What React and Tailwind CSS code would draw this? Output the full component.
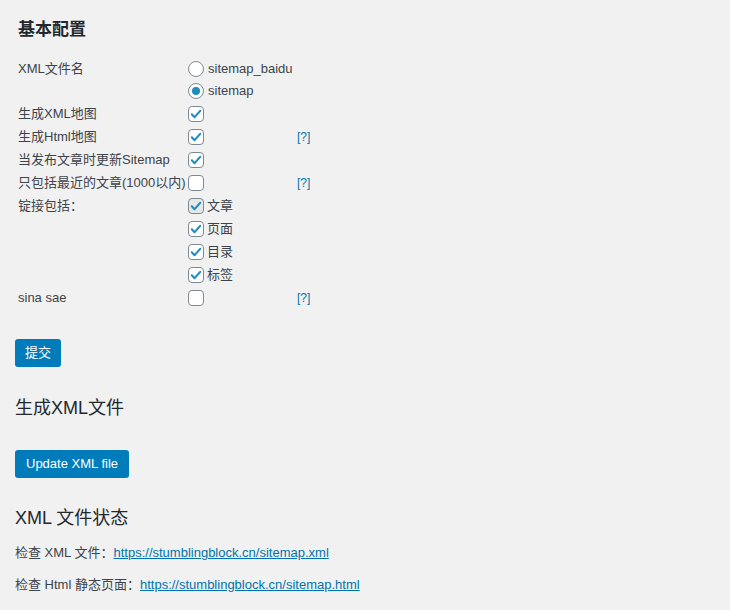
import React from "react";

const font = { fontFamily: '"Liberation Sans", "Noto Sans CJK SC", sans-serif' };

function Check({ checked = true, dim = false }) {
  return (
    <span className={`inline-flex h-4 w-4 shrink-0 items-center justify-center rounded-[4px] border border-[#7e8993] ${dim ? "bg-[#e6e7e8]" : "bg-white"}`}>
      {checked && (
        <svg viewBox="0 0 20 20" className="h-[14px] w-[14px]">
          <path d="M4 10.5 L8 14.5 L16 5.5" fill="none" stroke="#1e8cbe" strokeWidth="3" strokeLinecap="round" strokeLinejoin="round" />
        </svg>
      )}
    </span>
  );
}

function Radio({ checked }) {
  return (
    <span className="inline-flex h-4 w-4 shrink-0 items-center justify-center rounded-full border border-[#7e8993] bg-white">
      {checked && <span className="h-2 w-2 rounded-full bg-[#1e8cbe]" />}
    </span>
  );
}

function Help() {
  return <span className="text-[12px] text-[#0073aa]">[?]</span>;
}

function Row({ label, children, help, h = "h-[23px]" }) {
  return (
    <div className={`flex items-center ${h}`}>
      <div className="w-[170px] shrink-0 whitespace-nowrap">{label}</div>
      <div className="w-[109px] shrink-0 flex items-center gap-1">{children}</div>
      <div>{help && <Help />}</div>
    </div>
  );
}

export default function App() {
  return (
    <div className="min-h-[610px] w-[730px] bg-[#f1f1f1] text-[13px] text-[#3c434a]" style={font}>
      <div className="pl-[15px] pt-[17px]">
        <h2 className="ml-[3px] text-[17px] font-bold leading-[26px] text-[#23282d]">基本配置</h2>
        <div className="ml-[3px] mt-[17px]">
          <div className="flex">
            <div className="w-[170px] shrink-0 leading-[22px] -mt-[2px]">XML文件名</div>
            <div className="flex flex-col">
              <div className="flex h-[22px] items-center gap-[4px] -mt-[2px]"><Radio /><span>sitemap_baidu</span></div>
              <div className="flex h-[22px] items-center gap-[4px]"><Radio checked /><span>sitemap</span></div>
            </div>
          </div>
          <Row label="生成XML地图"><Check /></Row>
          <Row label="生成Html地图" help><Check /></Row>
          <Row label="当发布文章时更新Sitemap"><Check /></Row>
          <Row label="只包括最近的文章(1000以内)" help><Check checked={false} /></Row>
          <div className="flex">
            <div className="w-[170px] shrink-0 leading-[23px]">锭接包括：</div>
            <div className="flex flex-col">
              {["文章", "页面", "目录", "标签"].map((t, i) => (
                <div key={t} className="flex h-[23px] items-center gap-[3px]"><Check dim={i === 0} /><span>{t}</span></div>
              ))}
            </div>
          </div>
          <Row label="sina sae" help h="h-[24px]"><Check checked={false} /></Row>
        </div>
        <button className="mt-[29px] h-[28px] rounded-[3px] bg-[#007cba] px-[10px] text-[13px] leading-[26px] text-white">提交</button>
        <h2 className="mt-[27px] text-[18px] leading-[28px] text-[#23282d]">生成XML文件</h2>
        <button className="mt-[28px] h-[28px] rounded-[3px] bg-[#007cba] px-[11px] text-[13px] leading-[26px] text-white">Update XML file</button>
        <h2 className="mt-[26px] text-[18px] leading-[28px] text-[#23282d]">XML 文件状态</h2>
        <p className="mt-[11px] leading-[20px]">检查 XML 文件：<a className="text-[#0073aa] underline">https://stumblingblock.cn/sitemap.xml</a></p>
        <p className="mt-[12px] leading-[20px]">检查 Html 静态页面：<a className="text-[#0073aa] underline">https://stumblingblock.cn/sitemap.html</a></p>
      </div>
    </div>
  );
}
